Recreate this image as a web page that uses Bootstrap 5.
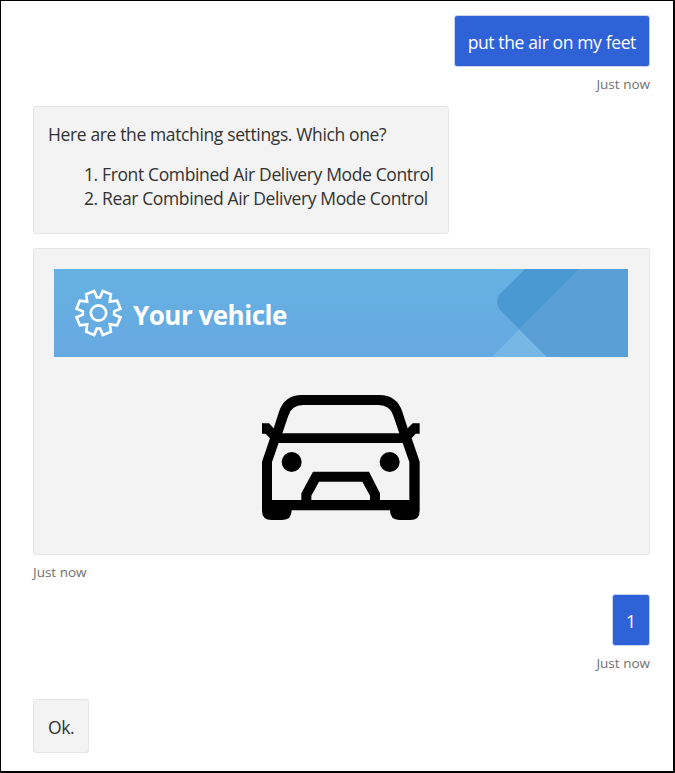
<!DOCTYPE html>
<html lang="en">
<head>
<meta charset="utf-8">
<title>Vehicle assistant</title>
<link href="https://cdn.jsdelivr.net/npm/bootstrap@5.3.0/dist/css/bootstrap.min.css" rel="stylesheet">
<style>
body{font-family:"Open Sans","Noto Sans",sans-serif;font-size:17.5px;line-height:24px;color:#323232}
.chat{width:675px;height:773px;border:solid #000;border-width:1px 2px 2px 1px;padding:14px 23px 0 32px}
.bubble{border:1px solid #e5e5e5;border-radius:3px;background:#f3f3f3;padding:15px 14px 13px}
.mine{background:#2f62d6;border-color:#c9d4ee;color:#fff;padding:14px 13px 12px;height:52px;margin-right:0}
.stamp{font-size:13.5px;line-height:18px;color:#707070;letter-spacing:0}
.t1{letter-spacing:-.37px;white-space:nowrap}
.choices{width:416px;height:128px;margin-top:13px}
.choices ol{margin:16px 0 0;padding-left:54px}
.vehicle{width:617px;height:307px;margin-top:14px;padding:20px 21px 20px 20px}
.banner{height:88px;background:linear-gradient(#66b1e3,#66a9e1)}
.banner .gear{margin-left:20px;width:49px;height:48px}
.banner-title{font-size:26px;line-height:36px;font-weight:700;letter-spacing:-.5px;margin-left:10px;margin-top:4px;color:#fff;white-space:nowrap}
.car{margin-top:38px}
.reply{margin-top:13px}
.ok{width:56px;height:54px;margin-top:27px}
</style>
<script src="https://cdn.jsdelivr.net/npm/bootstrap@5.3.0/dist/js/bootstrap.bundle.min.js"></script>
</head>
<body>
<main class="chat d-flex flex-column align-items-start overflow-hidden">
  <div class="bubble mine t1 align-self-end"><span>put the air on my feet</span></div>
  <div class="stamp align-self-end mt-2"><span>Just now</span></div>
  <div class="bubble choices t1">
    <div><span>Here are the matching settings. Which one?</span></div>
    <ol><li><span>Front Combined Air Delivery Mode Control</span></li><li><span>Rear Combined Air Delivery Mode Control</span></li></ol>
  </div>
  <div class="bubble vehicle">
    <div class="banner d-flex align-items-center">
      <svg class="gear" viewBox="-73.5 -72 147 144" fill="none" stroke="#fff" stroke-width="8">
        <path d="M5-47 13-66 37-56 34-34 56-37 66-13 47-5V5L66 13 56 37 34 34 37 56 13 66 5 47H-5L-13 66-37 56-34 34-56 37-66 13-47 5V-5L-66-13-56-37-34-34-37-56-13-66-5-47Z"/>
        <circle r="23"/>
      </svg>
      <div class="banner-title"><span>Your vehicle</span></div>
      <svg class="ms-auto" width="136" height="88" viewBox="0 0 136 88">
        <path d="M0 88 87 0H136V88Z" fill="#76b7e5"/>
        <path d="M33 0H136V88H55L8 41Q2 33 8 25Z" fill="#4a99d3"/>
        <path d="M87 0H136V88H55L27 60Z" fill="#5a9fd6"/>
      </svg>
    </div>
    <svg class="d-block mx-auto car" width="158" height="125" viewBox="36 30 474 375">
      <path fill-rule="evenodd" d="M36 115H57L71 130 87 80Q104 30 155 30H388Q440 30 457 80L473 130 488 115H509V146H497L485 160 509 230V377Q509 405 481 405H448Q420 405 420 376H125Q125 405 97 405H65Q36 405 36 377V230L60 160 47 146H36ZM97 145H448L430 92Q420 60 385 60H159Q125 60 115 92ZM86 174 66 231V345H154V325L189 260H357L390 325V345H478V231L458 174ZM184 345H360V332L337 290H207L184 332Z"/>
      <circle cx="125" cy="231" r="30"/><circle cx="419" cy="231" r="30"/>
    </svg>
  </div>
  <div class="stamp mt-2"><span>Just now</span></div>
  <div class="bubble mine reply align-self-end"><span>1</span></div>
  <div class="stamp align-self-end mt-2"><span>Just now</span></div>
  <div class="bubble ok t1"><span>Ok.</span></div>
</main>
</body>
</html>
